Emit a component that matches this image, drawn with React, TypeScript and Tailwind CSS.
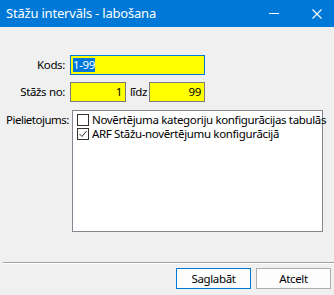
import React from "react";

export default function App() {
  const font = { fontFamily: '"Noto Sans", "Open Sans", sans-serif' };
  return (
    <div
      className="w-[334px] h-[295px] bg-[#f0f0f0] flex flex-col overflow-hidden text-[11.5px] tracking-[-0.35px] text-black whitespace-nowrap"
      style={font}
    >
      <div className="h-[27px] bg-[#0078d7] flex items-center text-white shrink-0">
        <div className="pl-[6px] text-[13px] tracking-[-0.2px] flex-1 leading-none">Stāžu intervāls - labošana</div>
        <svg width="10" height="1" className="mr-[33px]" viewBox="0 0 10 1">
          <rect x="0" y="0" width="10" height="1" fill="white" />
        </svg>
        <svg width="10" height="10" className="mr-[12px]" viewBox="0 0 10 10">
          <path d="M0.5 0.5 L9.5 9.5 M9.5 0.5 L0.5 9.5" stroke="white" strokeWidth="1.1" />
        </svg>
      </div>
      <div className="flex-1 flex flex-col pt-[28px]">
        <div className="flex items-center h-[20px]">
          <div className="w-[66px] text-right pr-[1px]">Kods:</div>
          <div className="ml-[4px] w-[135px] h-[20px] bg-[#ffff00] border border-[#0078d7] flex items-center pl-[2px]">
            <span className="bg-[#0078d7] text-white leading-[14px]">1-99</span>
          </div>
        </div>
        <div className="flex items-center h-[20px] mt-[7px]">
          <div className="w-[66px] text-right pr-[1px]">Stāžs no:</div>
          <div className="ml-[4px] w-[56px] h-[20px] bg-[#ffff00] border border-[#7a7a7a] flex items-center justify-end pr-[3px]">
            1
          </div>
          <div className="w-[23px] pl-[4px]">līdz</div>
          <div className="w-[56px] h-[20px] bg-[#ffff00] border border-[#7a7a7a] flex items-center justify-end pr-[3px]">
            99
          </div>
        </div>
        <div className="flex mt-[8px]">
          <div className="w-[72px] pl-[6px] pt-[1px] tracking-[-0.5px]">Pielietojums:</div>
          <div className="w-[251px] h-[122px] bg-white border border-[#828790] pt-[1px] pl-[4px]">
            <div className="flex items-center h-[13px] mt-[1px]">
              <div className="w-[12px] h-[12px] border border-[#333333] bg-white shrink-0" />
              <span className="ml-[3px]">Novērtējuma kategoriju konfigurācijas tabulās</span>
            </div>
            <div className="flex items-center h-[13px] mt-[1px]">
              <div className="w-[12px] h-[12px] border border-[#333333] bg-white flex items-center justify-center shrink-0">
                <svg width="10" height="10" viewBox="0 0 10 10">
                  <path d="M1.5 5 L4 7.5 L8.5 2" stroke="#333" strokeWidth="1" fill="none" />
                </svg>
              </div>
              <span className="ml-[3px]">ARF Stāžu-novērtējumu konfigurācijā</span>
            </div>
          </div>
        </div>
        <div className="flex-1" />
        <div className="ml-[3px] h-[1px] bg-[#a0a0a0]" />
        <div className="ml-[3px] h-[1px] bg-white" />
        <div className="flex justify-end gap-[5px] pr-[3px] pt-[4px] pb-[6px]">
          <div className="w-[75px] h-[21px] border border-[#0078d7] bg-[#fdfdfd] flex items-center justify-center">
            Saglabāt
          </div>
          <div className="w-[75px] h-[21px] border border-[#adadad] bg-[#fdfdfd] flex items-center justify-center">
            Atcelt
          </div>
        </div>
      </div>
    </div>
  );
}
